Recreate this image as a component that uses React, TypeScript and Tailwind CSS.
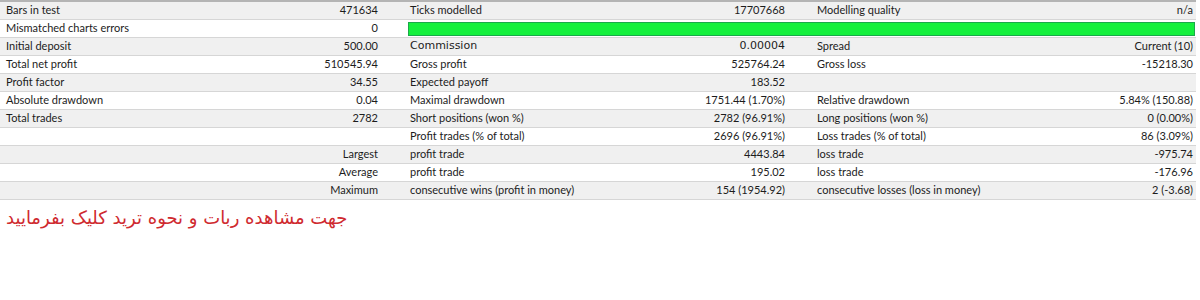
type Row = {
  cells: string[];
  gray: boolean;
  bar?: boolean;
  mono?: boolean;
};

const rows: Row[] = [
  { cells: ['Bars in test', '471634', 'Ticks modelled', '17707668', 'Modelling quality', 'n/a'], gray: true },
  { cells: ['Mismatched charts errors', '0'], gray: false, bar: true },
  { cells: ['Initial deposit', '500.00', 'Commission', '0.00004', 'Spread', 'Current (10)'], gray: true, mono: true },
  { cells: ['Total net profit', '510545.94', 'Gross profit', '525764.24', 'Gross loss', '-15218.30'], gray: false },
  { cells: ['Profit factor', '34.55', 'Expected payoff', '183.52', '', ''], gray: true },
  { cells: ['Absolute drawdown', '0.04', 'Maximal drawdown', '1751.44 (1.70%)', 'Relative drawdown', '5.84% (150.88)'], gray: false },
  { cells: ['Total trades', '2782', 'Short positions (won %)', '2782 (96.91%)', 'Long positions (won %)', '0 (0.00%)'], gray: true },
  { cells: ['', '', 'Profit trades (% of total)', '2696 (96.91%)', 'Loss trades (% of total)', '86 (3.09%)'], gray: false },
  { cells: ['', 'Largest', 'profit trade', '4443.84', 'loss trade', '-975.74'], gray: true },
  { cells: ['', 'Average', 'profit trade', '195.02', 'loss trade', '-176.96'], gray: false },
  { cells: ['', 'Maximum', 'consecutive wins (profit in money)', '154 (1954.92)', 'consecutive losses (loss in money)', '2 (-3.68)'], gray: true },
];

function Pair({ label, value, className, tahoma }: { label: string; value: string; className: string; tahoma?: boolean }) {
  const t = "font-['DejaVu_Sans',sans-serif] text-[11px]";
  return (
    <div className={`flex items-center justify-between ${className}`}>
      <span className={tahoma ? t : ''}>{label}</span>
      <span className={tahoma ? t : ''}>{value}</span>
    </div>
  );
}

export default function App() {
  return (
    <div className="w-[1200px] h-[300px] bg-white font-['Lato',sans-serif] text-[11px] text-[#1c1c1c]">
      <div className="w-[1196px] border-t-2 border-[#b4b4b4]">
        {rows.map((r, i) => (
          <div
            key={i}
            className={`grid h-[18px] grid-cols-[384px_407px_405px] border-b border-[#d6d6d6] ${r.gray ? 'bg-[#f0f0f0]' : 'bg-white'}`}
          >
            <Pair label={r.cells[0]} value={r.cells[1]} className="pl-[6px] pr-[6px]" />
            {r.bar ? (
              <div className="col-span-2 flex items-center pl-[24px] pr-[1px]">
                <div className="h-[14px] w-full border border-[#1aa84a] bg-[#14f03c]" />
              </div>
            ) : (
              <>
                <Pair label={r.cells[2]} value={r.cells[3]} className="pl-[26px] pr-[6px]" tahoma={r.mono} />
                <Pair label={r.cells[4]} value={r.cells[5]} className="pl-[26px] pr-[3px]" />
              </>
            )}
          </div>
        ))}
      </div>
      <div className="pl-[6px] pt-[5px]">
        <p dir="rtl" className="inline-block font-['DejaVu_Sans',sans-serif] text-[18px] leading-[26px] text-[#cf2a2f]">
          جهت مشاهده ربات و نحوه ترید کلیک بفرمایید
        </p>
      </div>
    </div>
  );
}
